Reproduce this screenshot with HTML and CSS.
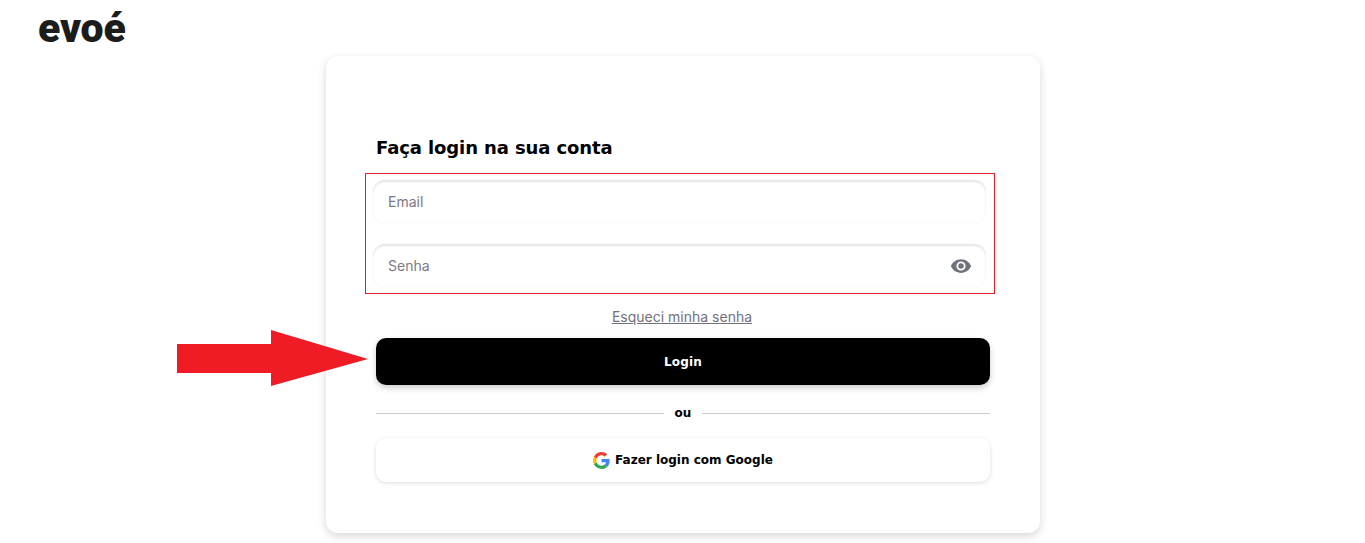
FILE: index.html
```html
<!DOCTYPE html>
<html lang="pt-BR">
<head>
<meta charset="utf-8">
<title>Login</title>
<link rel="stylesheet" href="styles.css">
</head>
<body>
<div class="page">
  <header class="topbar"><span class="logo">evoé</span></header>
  <main class="stage">
    <svg class="arrow" width="191" height="86" viewBox="0 0 191 86"><polygon points="0,14 94,14 94,0 191,29 94,56 94,43 0,43" fill="#ef1c25" transform="translate(0,0)"/></svg>
    <section class="card">
      <h1 class="title">Faça login na sua conta</h1>
      <div class="fields">
        <div class="field"><span class="placeholder">Email</span></div>
        <div class="field"><span class="placeholder">Senha</span>
          <svg class="eye" width="22" height="22" viewBox="0 0 24 24"><path fill="#6f717c" d="M12 4.5C7 4.5 2.7 7.6 1 12c1.7 4.4 6 7.5 11 7.5s9.3-3.1 11-7.5c-1.7-4.4-6-7.5-11-7.5zM12 17a5 5 0 1 1 0-10 5 5 0 0 1 0 10zm0-8a3 3 0 1 0 0 6 3 3 0 0 0 0-6z"/></svg>
        </div>
      </div>
      <a class="forgot" href="#">Esqueci minha senha</a>
      <button class="login" type="button">Login</button>
      <div class="divider"><span class="rule"></span><span class="ou">ou</span><span class="rule"></span></div>
      <button class="google" type="button">
        <svg width="17" height="17" viewBox="0 0 48 48"><path fill="#EA4335" d="M24 9.5c3.5 0 6.7 1.2 9.2 3.6l6.9-6.9C35.9 2.4 30.5 0 24 0 14.6 0 6.5 5.4 2.6 13.2l8 6.2C12.500 13.600 17.800 9.500 24 9.500z"/><path fill="#4285F4" d="M47 24.500c0-1.600-.1-3.100-.4-4.500H24v9h12.900c-.6 3-2.200 5.500-4.700 7.200l7.700 6C44.400 38 47 31.800 47 24.500z"/><path fill="#FBBC05" d="M10.500 28.600c-.5-1.400-.8-3-.8-4.600s.3-3.200.8-4.600l-8-6.200C.9 16.500 0 20.100 0 24s.9 7.500 2.600 10.800l7.900-6.200z"/><path fill="#34A853" d="M24 48c6.500 0 11.900-2.100 15.900-5.800l-7.700-6c-2.200 1.500-4.900 2.300-8.200 2.300-6.200 0-11.500-4.200-13.400-9.900l-8 6.200C6.500 42.600 14.600 48 24 48z"/></svg>
        <span>Fazer login com Google</span>
      </button>
    </section>
  </main>
</div>
</body>
</html>
```
FILE: styles.css
```css
* { box-sizing: border-box; }
html, body { margin: 0; height: 100%; background: #fff; overflow: hidden; }
.page { width: 1365px; height: 543px; display: flex; flex-direction: column; }
.topbar { height: 56px; padding-left: 38px; }
.logo {
  display: block;
  font-family: Roboto, "Liberation Sans", sans-serif;
  font-weight: 900;
  font-size: 41px;
  line-height: 36px;
  padding-top: 10px;
  letter-spacing: -0.2px;
  color: #1c1c1c;
}
.stage { position: relative; flex: 1; display: flex; padding-left: 326px; }
.arrow { position: absolute; left: 177px; top: 274px; }
.card {
  width: 714px;
  height: 477px;
  background: #fff;
  border-radius: 12px;
  box-shadow: 0 3px 8px rgba(0,0,0,.16);
  padding: 80px 50px 0;
  display: flex;
  flex-direction: column;
}
.title {
  margin: 0;
  font-family: "DejaVu Sans", sans-serif;
  font-weight: 700;
  font-size: 18px;
  line-height: 24px;
  color: #000;
  letter-spacing: -0.1px;
}
.fields {
  margin: 13px -5px 0 -11px;
  height: 121px;
  border: 1px solid #e0202a;
  padding: 6px 8px 0 7px;
  display: flex;
  flex-direction: column;
  gap: 21px;
}
.field {
  height: 43px;
  border-radius: 12px;
  box-shadow: inset 0 2px 2px rgba(0,0,0,.1), 0 0 2px rgba(0,0,0,.06);
  display: flex;
  align-items: center;
  justify-content: space-between;
  padding: 0 14px 0 15px;
}
.placeholder { font-family: Inter, sans-serif; font-size: 14px; color: #7a7a85; }
.eye { display: block; }
.forgot {
  align-self: center;
  margin-top: 14px;
  font-family: Inter, sans-serif;
  font-size: 14px;
  line-height: 18px;
  color: #71717c;
  position: relative;
  left: -1px;
}
.login {
  margin-top: 12px;
  width: 614px;
  height: 47px;
  border: 0;
  border-radius: 10px;
  background: #000;
  color: #fff;
  box-shadow: 0 3px 6px rgba(0,0,0,.2);
  font-family: "DejaVu Sans", sans-serif;
  font-weight: 700;
  font-size: 12px;
  letter-spacing: .2px;
}
.divider { margin-top: 20px; height: 17px; display: flex; align-items: center; gap: 11px; width: 614px; }
.rule { flex: 1; height: 1px; background: #c9c9c9; }
.ou { font-family: "DejaVu Sans", sans-serif; font-weight: 700; font-size: 12px; color: #000; line-height: 17px; }
.google {
  margin-top: 16px;
  width: 614px;
  height: 44px;
  border: 0;
  border-radius: 10px;
  background: #fff;
  box-shadow: 0 1px 4px rgba(0,0,0,.14);
  display: flex;
  align-items: center;
  justify-content: center;
  gap: 5px;
  font-family: "DejaVu Sans", sans-serif;
  font-weight: 700;
  font-size: 12px;
  color: #000;
}
```
